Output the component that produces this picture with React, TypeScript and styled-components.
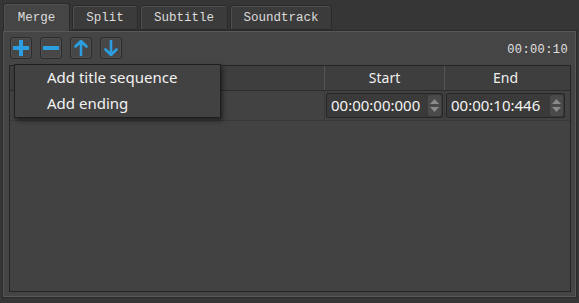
import styled, { createGlobalStyle } from 'styled-components'

const Global = createGlobalStyle`
	html, body {
		margin: 0;
		padding: 0;
		background: #363636;
		width: 579px;
		height: 303px;
		overflow: hidden;
	}
`

const Window = styled.div`
	width: 579px;
	height: 303px;
	padding: 3px 2px 0 2px;
	box-sizing: border-box;
	display: flex;
	flex-direction: column;
`

const TabBar = styled.div`
	display: flex;
	align-items: flex-end;
	height: 27px;
	padding-left: 1px;
	gap: 2px;
	position: relative;
	z-index: 1;
`

const Tab = styled.div<{ $active?: boolean; $w: number }>`
	width: ${({ $w }) => $w}px;
	height: ${({ $active }) => ($active ? 28 : 25)}px;
	box-sizing: border-box;
	margin-bottom: ${({ $active }) => ($active ? -1 : 0)}px;
	border: 1px solid #2a2a2a;
	border-bottom: ${({ $active }) => ($active ? 'none' : '1px solid #2a2a2a')};
	border-radius: 3px 3px 0 0;
	background: ${({ $active }) => ($active ? '#454545' : '#3b3b3b')};
	box-shadow: inset 1px 1px 0 #505050;
	color: #dcdcdc;
	font-family: 'Liberation Mono', monospace;
	font-size: 12.5px;
	display: flex;
	align-items: center;
	justify-content: center;
	padding-top: ${({ $active }) => ($active ? 0 : 1)}px;
`

const Pane = styled.div`
	width: 575px;
	height: 268px;
	box-sizing: border-box;
	border: 1px solid #2a2a2a;
	box-shadow: inset 1px 1px 0 #575757, inset -1px -1px 0 #575757;
	background: #454545;
	padding: 5px 5px 5px 6px;
	display: flex;
	flex-direction: column;
`

const Toolbar = styled.div`
	display: flex;
	align-items: center;
	gap: 8px;
	height: 24px;
	padding-left: 1px;
	margin-bottom: 5px;
`

const ToolButton = styled.div`
	width: 22px;
	height: 22px;
	box-sizing: border-box;
	border: 1px solid #2c2c2c;
	border-radius: 3px;
	background: #474747;
	box-shadow: inset 0 0 0 1px #4f4f4f;
	display: flex;
	align-items: center;
	justify-content: center;
`

const Duration = styled.div`
	margin-left: auto;
	margin-right: 3px;
	margin-top: 4px;
	color: #e0e0e0;
	font-family: 'Liberation Mono', monospace;
	font-size: 12px;
	letter-spacing: 0.4px;
`

const Table = styled.div`
	flex: 1;
	position: relative;
	border: 1px solid #242424;
	background: #424242;
	display: flex;
	flex-direction: column;
`

const Row = styled.div<{ $header?: boolean }>`
	display: grid;
	grid-template-columns: 315px 120px 121px;
	height: ${({ $header }) => ($header ? 24 : 29)}px;
	border-bottom: 1px solid ${({ $header }) => ($header ? '#2c2c2c' : '#383838')};
	background: ${({ $header }) => ($header ? '#3e3e3e' : '#424242')};
`

const HeadCell = styled.div`
	border-right: 1px solid #555555;
	color: #f0f0f0;
	font-family: 'Noto Sans', sans-serif;
	font-size: 14px;
	display: flex;
	align-items: center;
	justify-content: center;
	padding-bottom: 2px;
	&:last-child {
		border-right: none;
	}
`

const Cell = styled.div`
	border-right: 1px solid #383838;
	display: flex;
	align-items: center;
	padding: 0 1px 0 1px;
	&:last-child {
		border-right: none;
	}
`

const SpinBox = styled.div`
	flex: 1;
	height: 25px;
	box-sizing: border-box;
	border: 1px solid #262626;
	border-radius: 2px;
	background: #3a3a3a;
	display: flex;
	align-items: center;
	padding-left: 4px;
	padding-bottom: 1px;
	color: #f4f4f4;
	font-family: 'Noto Sans', sans-serif;
	font-size: 15px;
`

const SpinText = styled.span`
	flex: 1;
`

const Arrows = styled.div`
	width: 13px;
	height: 21px;
	margin-right: 1px;
	border-radius: 3px;
	background: #4a4a4a;
	display: flex;
	flex-direction: column;
	align-items: center;
	justify-content: center;
	gap: 3px;
`

const Menu = styled.div`
	position: absolute;
	left: 4px;
	top: -2px;
	width: 207px;
	height: 54px;
	box-sizing: border-box;
	border: 1px solid #1e1e1e;
	background: #424242;
	box-shadow: 2px 3px 4px rgba(0, 0, 0, 0.45);
	z-index: 2;
`

const MenuItem = styled.div`
	height: 26px;
	padding-left: 32px;
	padding-bottom: 2px;
	box-sizing: border-box;
	color: #f2f2f2;
	font-family: 'Noto Sans', sans-serif;
	font-size: 15px;
	display: flex;
	align-items: center;
`

const blue = '#2c9ee0'

const PlusIcon = () => (
	<svg width="16" height="16" viewBox="0 0 16 16">
		<rect x="6" y="0" width="4" height="16" fill={blue} />
		<rect x="0" y="6" width="16" height="4" fill={blue} />
	</svg>
)

const MinusIcon = () => (
	<svg width="16" height="16" viewBox="0 0 16 16">
		<rect x="0" y="6" width="16" height="4" fill={blue} />
	</svg>
)

const ArrowIcon = ({ down }: { down?: boolean }) => (
	<svg width="14" height="16" viewBox="0 0 14 16" style={down ? { transform: 'rotate(180deg)' } : undefined}>
		<path d="M7 1 L1.5 6.5 M7 1 L12.5 6.5 M7 1 V15" stroke={blue} strokeWidth="2.6" fill="none" strokeLinecap="round" strokeLinejoin="round" />
	</svg>
)

const Tri = ({ down }: { down?: boolean }) => (
	<svg width="9" height="5" viewBox="0 0 9 5">
		<path d={down ? 'M0 0 H9 L4.5 5 Z' : 'M0 5 H9 L4.5 0 Z'} fill="#8a8a8a" />
	</svg>
)

const Spin = ({ value }: { value: string }) => (
	<SpinBox>
		<SpinText>{value}</SpinText>
		<Arrows>
			<Tri />
			<Tri down />
		</Arrows>
	</SpinBox>
)

const App = () => {
	return (
		<Window>
			<Global />
			<TabBar>
				<Tab $active $w={67}>Merge</Tab>
				<Tab $w={66}>Split</Tab>
				<Tab $w={88}>Subtitle</Tab>
				<Tab $w={102}>Soundtrack</Tab>
			</TabBar>
			<Pane>
				<Toolbar>
					<ToolButton><PlusIcon /></ToolButton>
					<ToolButton><MinusIcon /></ToolButton>
					<ToolButton><ArrowIcon /></ToolButton>
					<ToolButton><ArrowIcon down /></ToolButton>
					<Duration>00:00:10</Duration>
				</Toolbar>
				<Table>
					<Row $header>
						<HeadCell />
						<HeadCell>Start</HeadCell>
						<HeadCell>End</HeadCell>
					</Row>
					<Row>
						<Cell />
						<Cell><Spin value="00:00:00:000" /></Cell>
						<Cell><Spin value="00:00:10:446" /></Cell>
					</Row>
					<Menu>
						<MenuItem>Add title sequence</MenuItem>
						<MenuItem>Add ending</MenuItem>
					</Menu>
				</Table>
			</Pane>
		</Window>
	)
}

export default App
